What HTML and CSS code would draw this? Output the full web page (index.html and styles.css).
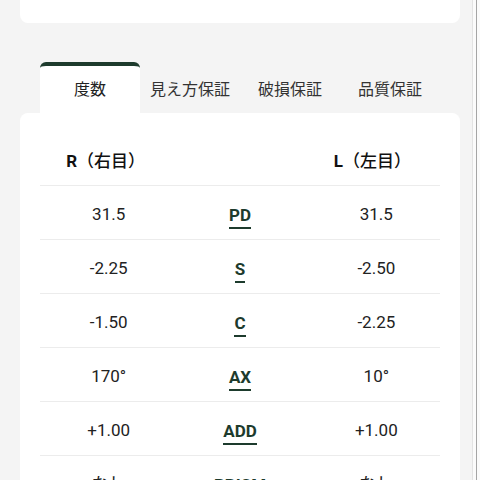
FILE: index.html
```html
<!DOCTYPE html>
<html lang="ja">
  <head>
    <meta charset="utf-8">
    <link rel="stylesheet" href="styles.css">
    <title>度数</title>
  </head>
  <body>
    <div class="page">
      <div class="top-card"></div>

      <div class="tabs">
        <div class="tab tab--active">度数</div>
        <div class="tab">見え方保証</div>
        <div class="tab">破損保証</div>
        <div class="tab">品質保証</div>
      </div>

      <div class="card">
        <div class="row row--head">
          <div class="cell"><b>R</b>（右目）</div>
          <div class="cell"></div>
          <div class="cell"><b>L</b>（左目）</div>
        </div>
        <div class="row">
          <div class="cell">31.5</div>
          <div class="cell"><span class="label">PD</span></div>
          <div class="cell">31.5</div>
        </div>
        <div class="row">
          <div class="cell">-2.25</div>
          <div class="cell"><span class="label">S</span></div>
          <div class="cell">-2.50</div>
        </div>
        <div class="row">
          <div class="cell">-1.50</div>
          <div class="cell"><span class="label">C</span></div>
          <div class="cell">-2.25</div>
        </div>
        <div class="row">
          <div class="cell">170°</div>
          <div class="cell"><span class="label">AX</span></div>
          <div class="cell">10°</div>
        </div>
        <div class="row">
          <div class="cell">+1.00</div>
          <div class="cell"><span class="label">ADD</span></div>
          <div class="cell">+1.00</div>
        </div>
        <div class="row">
          <div class="cell">なし</div>
          <div class="cell"><span class="label">PRISM</span></div>
          <div class="cell">なし</div>
        </div>
      </div>
    </div>
  </body>
</html>
```

FILE: styles.css
```css
* { box-sizing: border-box; }

html, body {
  margin: 0;
  background: #fbfbfb;
}

body {
  font-family: Roboto, "Noto Sans CJK JP", sans-serif;
  font-size: 16px;
  color: #222;
}

.page {
  width: 473px;
  min-height: 480px;
  overflow: hidden;
  background: #f4f4f4;
  border-right: 1px solid #e3e3e3;
  box-shadow: 3px 0 0 #fbfbfb, 4px 0 0 #a5a5a5;
}

.top-card {
  width: 440px;
  height: 23px;
  margin-left: 20px;
  background: #fff;
  border-radius: 0 0 8px 8px;
}

/* tabs */
.tabs {
  display: flex;
  width: 400px;
  margin: 39px 0 0 40px;
}

.tab {
  flex: 1;
  height: 51px;
  padding: 1px 0 0;
  display: flex;
  align-items: center;
  justify-content: center;
  color: #333;
}

.tab--active {
  background: #fff;
  color: #222;
  border-top: 4px solid #1d3b2d;
  border-radius: 6px 6px 0 0;
  padding: 0 0 3px;
}

/* prescription table */
.card {
  width: 440px;
  margin-left: 20px;
  padding: 19px 20px 0;
  background: #fff;
  border-radius: 8px;
  font-size: 17px;
}

.row {
  display: grid;
  grid-template-columns: 1fr 1fr 1fr;
  align-items: center;
  height: 54px;
  padding-top: 3px;
  border-top: 1px solid #ececec;
}

.row .cell:first-child { padding-left: 4px; }
.row .cell:last-child { padding-left: 6px; }

.row--head {
  border-top: none;
  height: 53px;
  padding-top: 4px;
  font-weight: 500;
  color: #111;
}

.row--head .cell:first-child { padding: 0 2px 0 0; }
.row--head .cell:last-child { padding: 0 2px 0 0; }

.row--head b { font-weight: 700; }

.cell {
  text-align: center;
  line-height: 20px;
}

.label {
  display: inline-block;
  font-weight: 700;
  color: #1d3b2d;
  padding-bottom: 2px;
  border-bottom: 2px solid #1d3b2d;
  margin-top: 5px;
}
```
